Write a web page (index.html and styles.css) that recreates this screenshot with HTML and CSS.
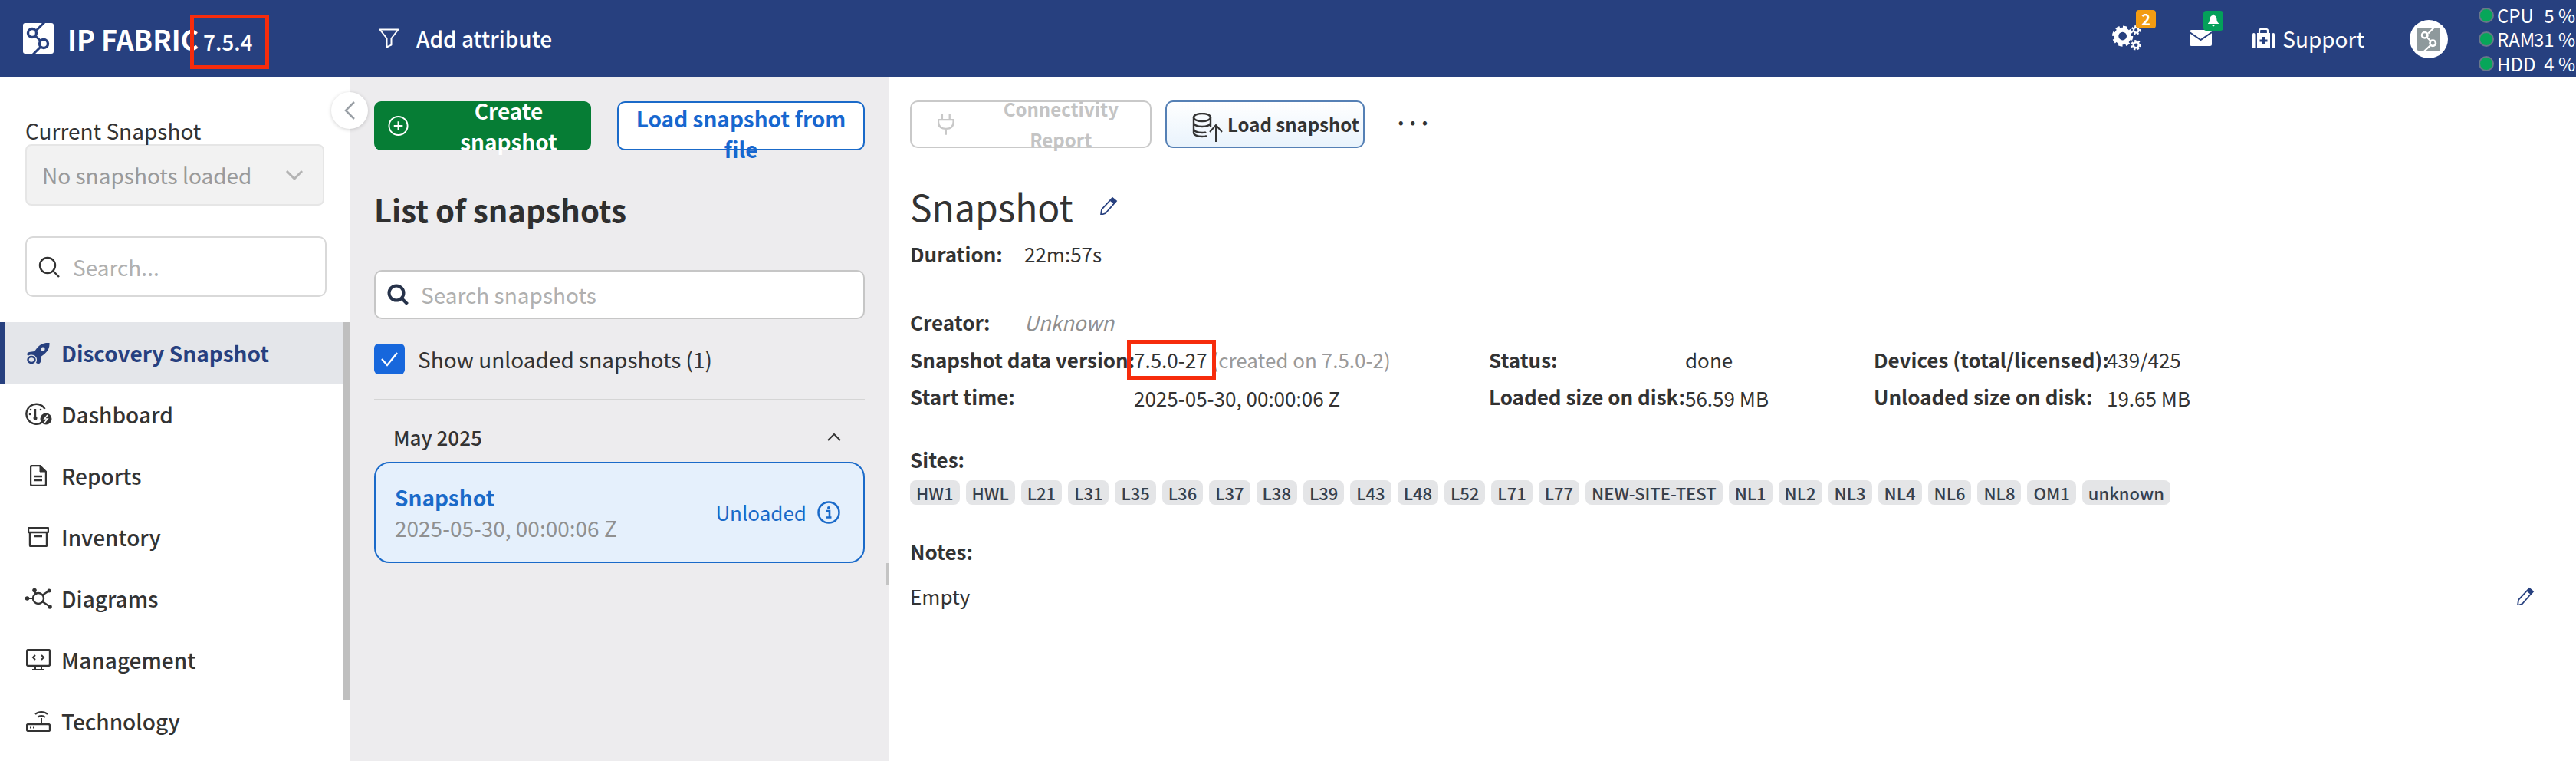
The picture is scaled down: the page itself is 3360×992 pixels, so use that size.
FILE: index.html
```html
<!DOCTYPE html>
<html lang="en">
<head>
<meta charset="utf-8">
<title>IP Fabric - Snapshot</title>
<link rel="stylesheet" href="styles.css">
</head>
<body>
<header class="topbar">
  <svg class="logo" viewBox="0 0 40 40"><rect width="40" height="40" rx="3" fill="#fff"/><path d="M28 -1 17 10M12 13 27 27 13 41" fill="none" stroke="#27407f" stroke-width="3"/><circle cx="12" cy="13" r="5.5" fill="#fff" stroke="#27407f" stroke-width="3.4"/><circle cx="27" cy="27" r="5.5" fill="#fff" stroke="#27407f" stroke-width="3.4"/></svg>
  <span class="brand">IP FABRIC</span>
  <span class="version">7.5.4</span>
  <svg class="funnel" viewBox="0 0 27 26"><path d="M1.5 1.5h24L16.5 13v8.5l-6 3V13z" fill="none" stroke="#fff" stroke-width="2" stroke-linejoin="round"/></svg>
  <span class="add-attr">Add attribute</span>
  <div class="top-right">
    <div class="gears">
      <svg class="gears-icon" viewBox="0 0 40 34">
        <circle cx="14" cy="15" r="8.5" fill="none" stroke="#fff" stroke-width="6"/><circle cx="14" cy="15" r="11.5" fill="none" stroke="#fff" stroke-width="5" stroke-dasharray="5 4.03"/>
        <circle cx="32" cy="7" r="3.4" fill="none" stroke="#fff" stroke-width="2.4"/><circle cx="32" cy="7" r="5.2" fill="none" stroke="#fff" stroke-width="2.4" stroke-dasharray="2.2 2.15"/>
        <circle cx="32" cy="27" r="3.6" fill="none" stroke="#fff" stroke-width="2.6"/><circle cx="32" cy="27" r="5.6" fill="none" stroke="#fff" stroke-width="2.6" stroke-dasharray="2.4 2.3"/>
      </svg>
      <span class="badge badge-orange">2</span>
    </div>
    <div class="mail">
      <svg class="mail-icon" viewBox="0 0 29 21"><rect width="29" height="21" rx="2.5" fill="#fff"/><path d="M0 3 14.5 13 29 3" fill="none" stroke="#27407f" stroke-width="2"/></svg>
      <span class="badge badge-green"><svg class="bell" viewBox="0 0 16 18"><path d="M8 0c1 0 1.500.6 1.500 1.500C12 2.300 13 4.500 13 7c0 3 1 4.500 3 6.500V14H0v-.5C2 11.500 3 10 3 7c0-2.500 1-4.700 3.500-5.500C6.500.6 7 0 8 0zM6 15.500h4c0 1.500-1 2.500-2 2.500s-2-1-2-2.500z" fill="#fff"/></svg></span>
    </div>
    <div class="support">
      <svg class="support-icon" viewBox="0 0 29 26"><path d="M9 6V3a2 2 0 0 1 2-2h7a2 2 0 0 1 2 2v3" fill="none" stroke="#fff" stroke-width="2.200"/><rect x="6" y="6" width="17" height="20" fill="#fff"/><rect x="0" y="6" width="3.500" height="20" rx="1.700" fill="#fff"/><rect x="25.500" y="6" width="3.500" height="20" rx="1.700" fill="#fff"/><path d="M14.500 11v10M9.500 16h10" stroke="#27407f" stroke-width="3"/></svg>
      <span>Support</span>
    </div>
    <div class="avatar">
      <svg class="avatar-logo" viewBox="0 0 40 40"><rect width="40" height="40" rx="2" fill="#8e999c"/><path d="M30 -1 19 10M13 13 27 27 12 41" fill="none" stroke="#fff" stroke-width="3"/><path d="M27 0h13v40H14z" fill="#fff" opacity="0"/><circle cx="13" cy="13" r="5" fill="#8e999c" stroke="#fff" stroke-width="3.400"/><circle cx="27" cy="27" r="5" fill="#8e999c" stroke="#fff" stroke-width="3.400"/></svg>
    </div>
    <div class="stats">
      <span class="dot"></span><span>CPU</span><span class="stat-val">5 %</span>
      <span class="dot"></span><span>RAM</span><span class="stat-val">31 %</span>
      <span class="dot"></span><span>HDD</span><span class="stat-val">4 %</span>
    </div>
  </div>
</header>

<div class="workspace">
  <aside class="sidebar">
    <button class="collapse" type="button"><svg class="collapse-icon" viewBox="0 0 15 24"><path d="M13 1 2 12l11 11" fill="none" stroke="#9aa0a6" stroke-width="2.500"/></svg></button>
    <div class="side-top">
      <div class="current-label">Current Snapshot</div>
      <div class="select"><span>No snapshots loaded</span><svg class="select-chev" viewBox="0 0 24 14"><path d="M2 2l10 10L22 2" fill="none" stroke="#b4b4b4" stroke-width="3"/></svg></div>
      <div class="side-search">
        <svg class="side-search-icon" viewBox="0 0 28 28"><circle cx="12" cy="12" r="10" fill="none" stroke="#333" stroke-width="2.400"/><path d="M19 19l8 8" stroke="#333" stroke-width="2.400"/></svg>
        <span>Search...</span>
      </div>
    </div>
    <nav class="nav">
      <a class="nav-item active"><span class="nav-icon"><svg viewBox="0 0 30 28" width="30" height="28"><path d="M29 1c-7-.5-12 2-16 7l-3 4-7 1c-2 .5-3 2-2.500 3.500l1 1.500c3-2 8-2 10 1 2 2 2 5 .5 8l2 1c2 .5 3.500-.5 4-2.500l1-7 4-3c5-4 7-9 6.500-14.500z" fill="#27407f"/><circle cx="21" cy="9" r="2.500" fill="#e4e6ea"/><ellipse cx="6" cy="23" rx="4.500" ry="4" fill="none" stroke="#27407f" stroke-width="2.500"/></svg></span>Discovery Snapshot</a>
      <a class="nav-item"><span class="nav-icon"><svg viewBox="0 0 36 30" width="36" height="30"><path d="M24 24.500A13 13 0 1 1 26.500 8" fill="none" stroke="#333" stroke-width="2.400"/><path d="M14 8v11" stroke="#333" stroke-width="2.400"/><circle cx="14" cy="20" r="2.500" fill="#333"/><circle cx="7" cy="15" r="1.300" fill="#333"/><circle cx="21" cy="9" r="1.300" fill="#333"/><circle cx="8" cy="9" r="1.300" fill="#333"/><circle cx="28" cy="21" r="7.500" fill="#333"/><path d="M30 16l-4 5h4l-4 5" fill="none" stroke="#fff" stroke-width="1.600"/></svg></span>Dashboard</a>
      <a class="nav-item"><span class="nav-icon"><svg viewBox="0 0 22 28" width="22" height="28"><path d="M3 1h10l8 8v16a2 2 0 0 1-2 2H3a2 2 0 0 1-2-2V3a2 2 0 0 1 2-2z" fill="none" stroke="#333" stroke-width="2.400"/><path d="M13 1v8h8" fill="#333" stroke="#333" stroke-width="1"/><path d="M6 15h10M6 20h10" stroke="#333" stroke-width="2.400"/></svg></span>Reports</a>
      <a class="nav-item"><span class="nav-icon"><svg viewBox="0 0 28 26" width="28" height="26"><rect x="1" y="1" width="26" height="6" rx="1" fill="none" stroke="#333" stroke-width="2.400"/><path d="M3 7v17a1 1 0 0 0 1 1h20a1 1 0 0 0 1-1V7M9 12h10" fill="none" stroke="#333" stroke-width="2.400"/></svg></span>Inventory</a>
      <a class="nav-item"><span class="nav-icon"><svg viewBox="0 0 36 28" width="36" height="28"><circle cx="18" cy="14" r="7" fill="none" stroke="#333" stroke-width="2.400"/><path d="M4 14h7M13 4l2 5M32 4l-9 6M32 24l-9-6" stroke="#333" stroke-width="2.200"/><circle cx="3.500" cy="14" r="2.800" fill="#333"/><circle cx="13" cy="3.500" r="2.800" fill="#333"/><circle cx="32" cy="4" r="2.500" fill="#333"/><circle cx="33" cy="25" r="2.800" fill="#333"/></svg></span>Diagrams</a>
      <a class="nav-item"><span class="nav-icon"><svg viewBox="0 0 32 28" width="32" height="28"><rect x="1" y="1" width="30" height="21" rx="2" fill="none" stroke="#333" stroke-width="2.400"/><path d="M12 8l-3 3 3 3M20 8l3 3-3 3M12 22v5M20 22v5M8 27h16" fill="none" stroke="#333" stroke-width="2"/></svg></span>Management</a>
      <a class="nav-item"><span class="nav-icon"><svg viewBox="0 0 32 28" width="32" height="28"><rect x="1" y="18" width="30" height="9" rx="2" fill="none" stroke="#333" stroke-width="2.400"/><path d="M5 22.500h2M9 22.500h2" stroke="#333" stroke-width="2"/><path d="M20 10v8M12 5a12 12 0 0 1 16 0M15 9a7 7 0 0 1 10 0" fill="none" stroke="#333" stroke-width="2"/></svg></span>Technology</a>
    </nav>
    <div class="side-thumb"></div>
  </aside>

  <section class="panel">
    <div class="panel-actions">
      <button class="btn-create" type="button"><svg class="plus-circle" viewBox="0 0 28 28"><circle cx="14" cy="14" r="12.500" fill="none" stroke="#fff" stroke-width="2"/><path d="M14 8v12M8 14h12" stroke="#fff" stroke-width="2"/></svg>Create snapshot</button>
      <button class="btn-load-file" type="button">Load snapshot from file</button>
    </div>
    <h2 class="list-title">List of snapshots</h2>
    <div class="panel-search">
      <svg class="panel-search-icon" viewBox="0 0 28 28"><circle cx="12" cy="12" r="9.500" fill="none" stroke="#26324a" stroke-width="4"/><path d="M19 19l7.500 7.500" stroke="#26324a" stroke-width="4"/></svg>
      <span>Search snapshots</span>
    </div>
    <label class="check-row"><span class="check"><svg class="check-mark" viewBox="0 0 24 20"><path d="M2 10l7 8L22 2" fill="none" stroke="#fff" stroke-width="2.400"/></svg></span>Show unloaded snapshots (1)</label>
    <hr class="divider">
    <div class="month"><span>May 2025</span><svg class="month-chev" viewBox="0 0 18 10"><path d="M1 9l8-8 8 8" fill="none" stroke="#333" stroke-width="2"/></svg></div>
    <div class="card">
      <div class="card-main">
        <div class="card-title">Snapshot</div>
        <div class="card-date">2025-05-30, 00:00:06 Z</div>
      </div>
      <div class="card-state">Unloaded<svg class="info" viewBox="0 0 30 30"><circle cx="15" cy="15" r="13.500" fill="none" stroke="#1a6ac9" stroke-width="2.500"/><circle cx="15" cy="9" r="2" fill="#1a6ac9"/><path d="M12 13h4v8M11.500 21.500h7" fill="none" stroke="#1a6ac9" stroke-width="2.600"/></svg></div>
    </div>
    <div class="handle"></div>
  </section>

  <main class="main">
    <div class="main-actions">
      <button class="btn-conn" type="button"><svg class="plug" viewBox="0 0 22 28"><path d="M6 0v8M16 0v8M1 8h20v3c0 6-4 9-10 9S1 17 1 11zM11 20v8" fill="none" stroke="#c8c8c8" stroke-width="2.400"/></svg>Connectivity Report</button>
      <button class="btn-load" type="button"><svg class="db" viewBox="0 0 40 38"><ellipse cx="13" cy="6" rx="11" ry="5" fill="none" stroke="#333" stroke-width="2.400"/><path d="M2 6v20c0 3 5 5 11 5 2 0 4 0 6-1M24 6v12M2 13c0 3 5 5 11 5s11-2 11-5M2 21c0 3 5 5 11 5 2 0 4 0 5-1" fill="none" stroke="#333" stroke-width="2.400"/><path d="M31 38V17M23 25l8-9 8 9" fill="none" stroke="#333" stroke-width="2"/></svg>Load snapshot</button>
      <span class="more">···</span>
    </div>
    <div class="title-row">
      <h1 class="title">Snapshot</h1>
      <svg class="pencil" viewBox="0 0 24 24"><path d="M17 2l5 4L8 22l-6 2 1-7z" fill="none" stroke="#27407f" stroke-width="1.800"/><path d="M17 2l5 4-3 4-5-4z" fill="#27407f"/></svg>
    </div>
    <div class="info-line line-duration"><b class="info-label">Duration:</b><span>22m:57s</span></div>
    <div class="info-line line-creator"><b class="info-label">Creator:</b><em class="unknown">Unknown</em></div>
    <div class="details">
      <b>Snapshot data version:</b>
      <span class="detail-version"><span class="marked">7.5.0-27</span><span class="created"> (created on 7.5.0-2)</span></span>
      <b>Status:</b><span>done</span>
      <b>Devices (total/licensed):</b><span>439/425</span>
      <b>Start time:</b><span class="low">2025-05-30, 00:00:06 Z</span>
      <b>Loaded size on disk:</b><span class="low">56.59 MB</span>
      <b>Unloaded size on disk:</b><span class="low">19.65 MB</span>
    </div>
    <b class="section-label sites-label">Sites:</b>
    <div class="chips">
      <span class="chip">HW1</span><span class="chip">HWL</span><span class="chip">L21</span><span class="chip">L31</span><span class="chip">L35</span><span class="chip">L36</span><span class="chip">L37</span><span class="chip">L38</span><span class="chip">L39</span><span class="chip">L43</span><span class="chip">L48</span><span class="chip">L52</span><span class="chip">L71</span><span class="chip">L77</span><span class="chip">NEW-SITE-TEST</span><span class="chip">NL1</span><span class="chip">NL2</span><span class="chip">NL3</span><span class="chip">NL4</span><span class="chip">NL6</span><span class="chip">NL8</span><span class="chip">OM1</span><span class="chip">unknown</span>
    </div>
    <b class="section-label notes-label">Notes:</b>
    <div class="notes-row">
      <span>Empty</span>
      <svg class="pencil" viewBox="0 0 24 24"><path d="M17 2l5 4L8 22l-6 2 1-7z" fill="none" stroke="#27407f" stroke-width="1.800"/><path d="M17 2l5 4-3 4-5-4z" fill="#27407f"/></svg>
    </div>
  </main>
</div>
</body>
</html>
```

FILE: styles.css
```css
* { box-sizing: border-box; }
html, body { margin: 0; height: 992px; overflow: hidden; }
body {
  font-family: "Noto Sans CJK JP", "Source Sans Pro", "Noto Sans", sans-serif;
  font-size: 28px;
  line-height: 40px;
  color: #333;
  background: #fff;
}
button { font: inherit; padding: 0; cursor: pointer; }
h1, h2 { margin: 0; }

/* top bar */
.topbar {
  height: 100px;
  background: #27407f;
  color: #fff;
  display: flex;
  align-items: center;
  padding-left: 30px;
}
.logo { width: 40px; height: 40px; flex: none; }
.brand {
  margin-left: 18px;
  width: 160px;
  font-size: 36px;
  font-weight: 700;
  white-space: nowrap;
}
.version {
  width: 103px;
  height: 71px;
  margin-top: 9px;
  border: 5px solid #f62c0c;
  padding-left: 12px;
  font-weight: 500;
  line-height: 61px;
}
.funnel { width: 27px; height: 26px; margin-left: 143px; flex: none; }
.add-attr { margin-left: 22px; font-weight: 500; }
.top-right { margin-left: auto; display: flex; align-items: center; }
.gears { position: relative; width: 39px; height: 34px; margin-top: -2px; margin-right: 62px; }
.gears-icon { display: block; width: 39px; height: 34px; }
.badge {
  position: absolute;
  width: 26px;
  display: flex;
  align-items: center;
  justify-content: center;
  border-radius: 4px;
  color: #fff;
  font-size: 20px;
  font-weight: 700;
}
.badge-orange { left: 31px; top: -19px; height: 24px; background: #f39c12; line-height: 24px; }
.mail { position: relative; width: 29px; height: 21px; margin-top: -2px; margin-right: 53px; }
.mail-icon { display: block; width: 29px; height: 21px; }
.badge-green { left: 18px; top: -25px; height: 26px; background: #04a05a; }
.bell { width: 14px; height: 17px; }
.support { display: flex; align-items: center; gap: 10px; margin-right: 59px; }
.support-icon { width: 29px; height: 26px; }
.avatar {
  width: 50px;
  height: 50px;
  margin-top: 2px;
  border-radius: 50%;
  background: #fff;
  display: flex;
  align-items: center;
  justify-content: center;
  margin-right: 40px;
}
.avatar-logo { width: 30px; height: 30px; }
.stats {
  display: grid;
  grid-template-columns: 20px 50px 48px;
  column-gap: 4px;
  grid-auto-rows: 31.500px;
  align-items: center;
  width: 127px;
  font-size: 24px;
  line-height: 30px;
  margin-top: 2px;
}
.dot { width: 20px; height: 20px; border-radius: 50%; background: #07a659; border: 2px solid #68778a; }
.stat-val { text-align: right; white-space: nowrap; margin-left: -8px; }

/* workspace */
.workspace { display: flex; height: 892px; }
.sidebar { position: relative; width: 456px; flex: none; background: #fff; z-index: 1; }
.side-top { padding: 52px 30px 0 33px; }
.current-label { line-height: 36px; color: #333; }
.select {
  width: 390px;
  height: 80px;
  background: #f2f2f2;
  border: 2px solid #e6e6e6;
  border-radius: 8px;
  display: flex;
  align-items: center;
  justify-content: space-between;
  padding: 0 25px 0 20px;
  color: #9a9a9a;
}
.select-chev { width: 24px; height: 14px; }
.side-search {
  width: 393px;
  height: 79px;
  margin-top: 40px;
  border: 2px solid #d9d9d9;
  border-radius: 10px;
  display: flex;
  align-items: center;
  padding-left: 15px;
  color: #b0b0b0;
}
.side-search-icon { width: 28px; height: 28px; margin-right: 17px; }
.collapse {
  position: absolute;
  left: 432px;
  top: 20px;
  width: 48px;
  height: 48px;
  border: 0;
  border-radius: 50%;
  background: #fff;
  box-shadow: 0 1px 5px rgba(0,0,0,.18);
  display: flex;
  align-items: center;
  justify-content: center;
}
.collapse-icon { width: 15px; height: 24px; }
.nav { margin-top: 33px; width: 448px; }
.nav-item {
  height: 80px;
  display: flex;
  align-items: center;
  padding-left: 26px;
  font-weight: 500;
  color: #333;
  border-left: 0;
}
.nav-icon { width: 48px; margin-right: 6px; display: flex; justify-content: center; flex: none; }
.nav-item.active {
  background: #e4e6ea;
  box-shadow: inset 6px 0 0 #27407f;
  color: #27407f;
  font-weight: 600;
}
.side-thumb { position: absolute; left: 448px; top: 320px; width: 8px; height: 493px; background: #bfbfbf; }

/* list panel */
.panel {
  position: relative;
  width: 704px;
  flex: none;
  background: #edecee;
  padding: 32px 32px 0;
}
.panel-actions { display: flex; justify-content: space-between; }
.btn-create {
  width: 283px;
  height: 64px;
  border: 0;
  border-radius: 9px;
  background: #067d35;
  color: #fff;
  font-weight: 600;
  display: flex;
  align-items: center;
  padding-left: 18px;
}
.plus-circle { width: 28px; height: 28px; margin-right: 23px; }
.btn-load-file {
  width: 323px;
  height: 64px;
  border: 2px solid #1a6ac9;
  border-radius: 10px;
  background: #fff;
  color: #1767cf;
  font-weight: 600;
}
.list-title { margin-top: 53px; font-size: 40px; line-height: 48px; font-weight: 700; color: #2f2f2f; }
.panel-search {
  height: 64px;
  margin-top: 55px;
  background: #fff;
  border: 2px solid #c6c6c6;
  border-radius: 10px;
  display: flex;
  align-items: center;
  padding-left: 15px;
  color: #b0b0b0;
}
.panel-search-icon { width: 28px; height: 28px; margin-right: 16px; }
.check-row { margin-top: 32px; height: 40px; display: flex; align-items: center; }
.check {
  width: 40px;
  height: 40px;
  border-radius: 6px;
  background: #1767dc;
  margin-right: 17px;
  display: flex;
  align-items: center;
  justify-content: center;
}
.check-mark { width: 24px; height: 20px; }
.divider { margin: 32px 0 0; border: 0; height: 2px; background: #d5d5d5; }
.month {
  margin-top: 28px;
  height: 40px;
  padding: 0 31px 0 25px;
  display: flex;
  align-items: center;
  justify-content: space-between;
  font-size: 26px;
  font-weight: 500;
}
.month-chev { width: 18px; height: 10px; }
.card {
  margin-top: 12px;
  height: 132px;
  background: #e5f0fc;
  border: 2px solid #1a6ac9;
  border-radius: 20px;
  display: flex;
  align-items: center;
  justify-content: space-between;
  padding: 0 30px 0 25px;
}
.card-title { color: #1a6ac9; font-weight: 600; }
.card-date { color: #909090; }
.card-state { display: flex; align-items: center; gap: 14px; color: #1a6ac9; font-size: 26px; }
.info { width: 30px; height: 30px; }
.handle { position: absolute; right: 0; top: 634px; width: 4px; height: 29px; background: #c4c4c4; }

/* main */
.main { flex: 1; min-width: 0; padding: 31px 54px 0 27px; }
.main-actions { display: flex; align-items: center; }
.btn-conn {
  width: 315px;
  height: 62px;
  border: 2px solid #c9c9c9;
  border-radius: 10px;
  background: #fff;
  color: #c4c4c4;
  font-size: 24px;
  font-weight: 600;
  display: flex;
  align-items: center;
  padding-left: 34px;
}
.plug { width: 22px; height: 28px; margin-right: 23px; }
.btn-load {
  width: 260px;
  height: 62px;
  margin-left: 18px;
  border: 2px solid #5580b5;
  border-radius: 10px;
  background: linear-gradient(#fff, #e9f3fc);
  color: #333;
  font-size: 24px;
  font-weight: 600;
  display: flex;
  align-items: center;
  padding-left: 33px;
}
.db { width: 40px; height: 38px; margin: 8px 6px 0 0; }
.more { margin-left: 39px; font-size: 28px; font-weight: 700; line-height: 40px; margin-top: -6px; letter-spacing: -1px; }
.title-row { margin-top: 45px; display: flex; align-items: center; height: 60px; }
.title { font-size: 48px; line-height: 60px; font-weight: 400; }
.pencil { width: 24px; height: 24px; flex: none; }
.title-row .pencil { margin-left: 34px; }
.info-line { display: flex; height: 40px; font-size: 26px; }
.info-label { width: 149px; font-weight: 700; }
.line-duration { margin-top: 13px; }
.line-creator { margin-top: 49px; }
.unknown { color: #8f8f8f; }
.details {
  margin-top: 5px;
  display: grid;
  grid-template-columns: 292px 463px 256px 246px 304px auto;
  grid-auto-rows: 48px;
  align-items: center;
  font-size: 26px;
}
.details b { font-weight: 700; white-space: nowrap; }
.detail-version { white-space: nowrap; }
.marked { position: relative; }
.marked::after {
  content: "";
  position: absolute;
  left: -9px;
  right: -11px;
  top: -7px;
  bottom: -8px;
  border: 5px solid #f62c0c;
}
.created { color: #9a9a9a; }
.low { position: relative; top: 2px; }
.section-label { display: block; font-size: 26px; font-weight: 700; line-height: 40px; }
.sites-label { margin-top: 38px; }
.chips { margin-top: 7px; display: flex; flex-wrap: wrap; gap: 8px; }
.chip {
  height: 32px;
  padding: 0 8px;
  background: #e4e5e7;
  border-radius: 8px;
  color: #37404c;
  font-size: 22px;
  font-weight: 500;
  line-height: 32px;
}
.notes-label { margin-top: 41px; }
.notes-row { margin-top: 18px; display: flex; align-items: center; justify-content: space-between; font-size: 26px; height: 40px; }
```
